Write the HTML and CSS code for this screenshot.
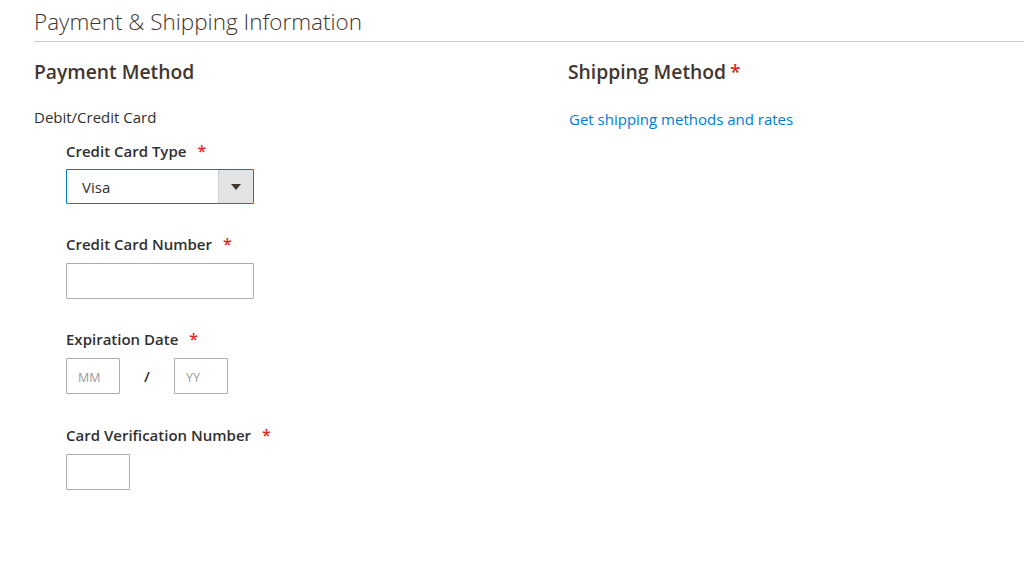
FILE: index.html
```html
<!DOCTYPE html>
<html lang="en">
<head>
    <meta charset="UTF-8">
    <meta name="viewport" content="width=device-width, initial-scale=1.0">
    <title>Payment &amp; Shipping Information</title>
    <link rel="stylesheet" href="styles.css">
</head>
<body>
    <section class="order-section">
        <h1 class="section-title">Payment &amp; Shipping Information</h1>

        <div class="section-columns">
            <!-- payment -->
            <div class="payment-col">
                <h2 class="col-title">Payment Method</h2>
                <div class="method-name">Debit/Credit Card</div>

                <fieldset class="card-fields">
                    <div class="field">
                        <label for="cc_type" class="required">Credit Card Type</label>
                        <div class="select-wrap">
                            <select id="cc_type" name="cc_type">
                                <option>Visa</option>
                                <option>MasterCard</option>
                                <option>American Express</option>
                                <option>Discover</option>
                            </select>
                            <span class="select-arrow"></span>
                        </div>
                    </div>

                    <div class="field">
                        <label for="cc_number" class="required">Credit Card Number</label>
                        <input type="text" id="cc_number" name="cc_number" class="input-wide">
                    </div>

                    <div class="field field-date">
                        <label for="cc_month" class="required">Expiration Date</label>
                        <div class="date-row">
                            <input type="text" id="cc_month" name="cc_month" class="input-date" placeholder="MM">
                            <span class="date-sep">/</span>
                            <input type="text" id="cc_year" name="cc_year" class="input-date" placeholder="YY">
                        </div>
                    </div>

                    <div class="field">
                        <label for="cc_cid" class="required">Card Verification Number</label>
                        <input type="text" id="cc_cid" name="cc_cid" class="input-cvv">
                    </div>
                </fieldset>
            </div>

            <!-- shipping -->
            <div class="shipping-col">
                <h2 class="col-title">Shipping Method<span class="star">*</span></h2>
                <a href="#" class="rates-link">Get shipping methods and rates</a>
            </div>
        </div>
    </section>
</body>
</html>
```

FILE: styles.css
```css
body {
    margin: 0;
    background: #fff;
    font-family: "Open Sans", "Liberation Sans", Arial, sans-serif;
    color: #303030;
}
.order-section {
    padding-left: 34px;
}
.section-title {
    margin: 0;
    padding-top: 7px;
    padding-bottom: 4px;
    font-size: 22.5px;
    line-height: 30px;
    font-weight: 300;
    color: #41362f;
    border-bottom: 1px solid #cccccc;
}
.section-columns {
    display: grid;
    grid-template-columns: 534px 1fr;
}
.col-title {
    margin: 17px 0 0;
    font-size: 19.3px;
    line-height: 25px;
    font-weight: 600;
    color: #41362f;
}
.star {
    color: #e22626;
    margin-left: 4px;
}
.method-name {
    margin-top: 23px;
    font-size: 15px;
    line-height: 20px;
}
.rates-link {
    display: inline-block;
    margin-top: 25px;
    margin-left: 1px;
    font-size: 15px;
    line-height: 20px;
    color: #007bdb;
    text-decoration: none;
}
.card-fields {
    border: none;
    margin: 0;
    padding: 14px 0 0 32px;
}
.field {
    margin-bottom: 30px;
}
.field-date {
    margin-bottom: 31px;
}
.field label {
    display: block;
    margin-bottom: 9px;
    font-size: 15px;
    line-height: 20px;
    font-weight: 600;
    color: #303030;
}
label.required::after {
    content: "*";
    color: #e22626;
    margin-left: 11px;
    font-size: 16px;
}
input, select {
    box-sizing: border-box;
    font-family: inherit;
    font-size: 15px;
    color: #303030;
    border: 1px solid #adadad;
    border-radius: 1px;
    background: #fff;
    outline: none;
}
input::placeholder {
    color: #9a9a9a;
    font-size: 12.5px;
}
.input-wide {
    width: 188px;
    height: 36px;
}
.select-wrap {
    position: relative;
    width: 188px;
    margin-top: -1px;
}
.select-wrap select {
    display: block;
    width: 188px;
    height: 35px;
    padding: 0 40px 0 15px;
    border-color: #007bdb;
    appearance: none;
    -webkit-appearance: none;
}
.select-arrow {
    position: absolute;
    top: 1px;
    right: 1px;
    width: 35px;
    height: 33px;
    background: #e3e3e3;
    border-left: 1px solid #cfcfcf;
    box-sizing: border-box;
    pointer-events: none;
}
.select-arrow::after {
    content: "";
    position: absolute;
    left: 12px;
    top: 14px;
    border-left: 5px solid transparent;
    border-right: 5px solid transparent;
    border-top: 6px solid #41362f;
}
.date-row {
    display: flex;
    align-items: center;
}
.input-date {
    width: 54px;
    height: 36px;
    padding: 0 11px;
}
.date-sep {
    width: 54px;
    text-align: center;
    font-size: 15px;
    font-weight: 600;
}
.input-cvv {
    width: 64px;
    height: 36px;
}
```
